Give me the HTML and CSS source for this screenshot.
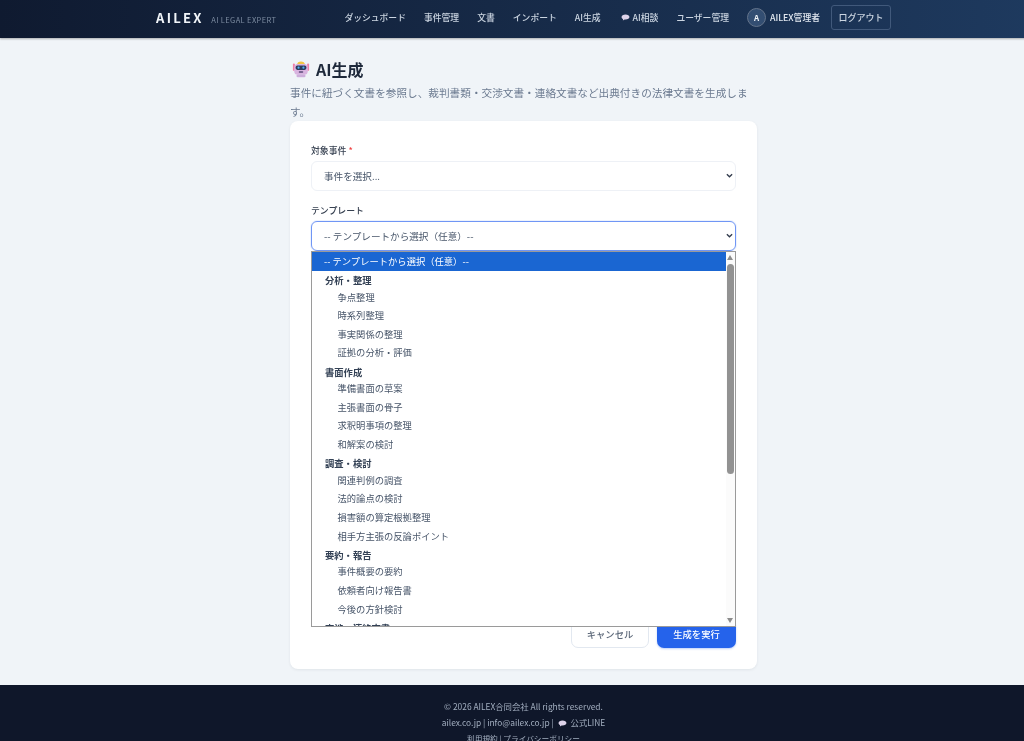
FILE: index.html
```html
<!DOCTYPE html>
<html lang="ja">
<head>
<meta charset="utf-8">
<title>AI生成 - AILEX</title>
<link rel="stylesheet" href="styles.css">
</head>
<body>
<header class="site-header">
  <div class="header-inner">
    <a class="brand" href="#"><span class="brand-name">AILEX</span><span class="brand-sub">AI LEGAL EXPERT</span></a>
    <nav class="nav">
      <a href="#">ダッシュボード</a>
      <a href="#">事件管理</a>
      <a href="#">文書</a>
      <a href="#">インポート</a>
      <a href="#">AI生成</a>
      <a href="#" class="nav-consult"><svg class="bubble" viewBox="0 0 10 8"><path d="M5 .6C2.4.6.5 1.8.5 3.5c0 1 .7 1.9 1.8 2.4l-.3 1.6 2-1.2H5c2.6 0 4.5-1.2 4.5-2.8S7.600.6 5 .6z"/></svg>AI相談</a>
      <a href="#">ユーザー管理</a>
      <span class="user"><span class="avatar">A</span>AILEX管理者</span>
      <button class="logout" type="button">ログアウト</button>
    </nav>
  </div>
</header>

<main class="main">
  <h1 class="title">
    <svg class="robot" viewBox="0 0 20 20">
      <rect x="1" y="4" width="2.200" height="8" rx="1" fill="#ef7fa6"/>
      <rect x="16.800" y="4" width="2.200" height="8" rx="1" fill="#ef7fa6"/>
      <path d="M5.500 5.500C5.500 .5 14.500 .5 14.500 5.500z" fill="#f5c542"/>
      <rect x="2.500" y="4.500" width="15" height="12" rx="4" fill="#d9b4e0"/>
      <rect x="4" y="6" width="12" height="5" rx="2" fill="#2d3a5c"/>
      <circle cx="7.300" cy="8.500" r="1.200" fill="#4fb4f0"/>
      <circle cx="12.700" cy="8.500" r="1.200" fill="#4fb4f0"/>
      <rect x="7.500" y="12.500" width="5" height="1.700" rx=".8" fill="#5a4a78"/>
      <rect x="5" y="16" width="10" height="3.200" rx="1.500" fill="#cdaedb"/>
    </svg>
    AI生成
  </h1>
  <p class="lead">事件に紐づく文書を参照し、裁判書類・交渉文書・連絡文書など出典付きの法律文書を生成します。</p>

  <form class="card">
    <div class="field">
      <label class="label">対象事件 <span class="req">*</span></label>
      <div class="select-wrap">
        <select class="select"><option>事件を選択...</option></select>
        <svg class="chevron" viewBox="0 0 8 5"><path d="M1 1l3 3 3-3"/></svg>
      </div>
    </div>
    <div class="field field-open">
      <label class="label">テンプレート</label>
      <div class="select-wrap">
        <select class="select select-focus"><option>-- テンプレートから選択（任意）--</option></select>
        <svg class="chevron" viewBox="0 0 8 5"><path d="M1 1l3 3 3-3"/></svg>
      </div>
      <div class="dropdown">
        <div class="list">
          <div class="opt opt-active">-- テンプレートから選択（任意）--</div>
          <div class="group">分析・整理</div>
          <div class="item">争点整理</div>
          <div class="item">時系列整理</div>
          <div class="item">事実関係の整理</div>
          <div class="item">証拠の分析・評価</div>
          <div class="group">書面作成</div>
          <div class="item">準備書面の草案</div>
          <div class="item">主張書面の骨子</div>
          <div class="item">求釈明事項の整理</div>
          <div class="item">和解案の検討</div>
          <div class="group">調査・検討</div>
          <div class="item">関連判例の調査</div>
          <div class="item">法的論点の検討</div>
          <div class="item">損害額の算定根拠整理</div>
          <div class="item">相手方主張の反論ポイント</div>
          <div class="group">要約・報告</div>
          <div class="item">事件概要の要約</div>
          <div class="item">依頼者向け報告書</div>
          <div class="item">今後の方針検討</div>
          <div class="group">交渉・連絡文書</div>
        </div>
        <div class="scrollbar">
          <span class="arrow arrow-up"></span>
          <span class="thumb"></span>
          <span class="arrow arrow-down"></span>
        </div>
      </div>
    </div>
    <div class="actions">
      <button class="btn btn-ghost" type="button">キャンセル</button>
      <button class="btn btn-primary" type="button">生成を実行</button>
    </div>
  </form>
</main>

<footer class="footer">
  <p>© 2026 AILEX合同会社 All rights reserved.</p>
  <p>ailex.co.jp | info@ailex.co.jp | <svg class="bubble bubble-foot" viewBox="0 0 10 8"><path d="M5 .6C2.4.6.5 1.8.5 3.5c0 1 .7 1.9 1.8 2.4l-.3 1.6 2-1.2H5c2.600 0 4.500-1.200 4.500-2.800S7.600.6 5 .6z"/></svg> 公式LINE</p>
  <p class="footer-links">利用規約 | プライバシーポリシー</p>
</footer>
</body>
</html>
```

FILE: styles.css
```css
* { box-sizing: border-box; }
html { overflow: hidden; height: 741px; background: #f0f4f8; }
body {
  margin: 0;
  width: 1047px;
  background: #f0f4f8;
  font-family: "Noto Sans CJK JP", "Noto Sans", sans-serif;
  color: #1e293b;
  filter: blur(.3px);
}
a { color: inherit; text-decoration: none; }

.site-header {
  height: 37.500px;
  background: linear-gradient(90deg, #0f1a30 0%, #1e3a5f 100%);
  box-shadow: 0 1px 2px rgba(0, 0, 0, .3);
  position: relative;
}
.header-inner {
  width: 735px;
  height: 100%;
  margin: 0 auto;
  padding-bottom: 3px;
  display: flex;
  align-items: center;
  justify-content: space-between;
}
.brand { display: flex; align-items: baseline; gap: 7.500px; }
.brand-name { font-size: 13px; font-weight: 700; letter-spacing: 2.300px; color: #f1f5f9; }
.brand-sub { font-size: 7.500px; letter-spacing: .38px; color: #7d8ca1; }
.nav { display: flex; align-items: center; gap: 18px; font-size: 8.800px; font-weight: 500; color: #cbd5e1; }
.nav-consult { display: flex; align-items: center; gap: 3px; margin-left: 2px; }
.bubble { width: 9px; height: 7px; fill: #ddd3ea; }
.bubble-foot { display: inline-block; vertical-align: -0.500px; margin: 0 2px; }
.user { display: flex; align-items: center; gap: 4px; color: #e2e8f0; margin-right: -7px; }
.avatar {
  width: 19px;
  height: 19px;
  border-radius: 50%;
  border: 1px solid #64748b;
  background: #334e72;
  color: #f1f5f9;
  font-size: 8px;
  font-weight: 700;
  display: flex;
  align-items: center;
  justify-content: center;
}
.logout {
  width: 60px;
  height: 25px;
  background: transparent;
  border: 1px solid #41597b;
  border-radius: 3px;
  font: inherit;
  font-size: 9px;
  color: #cbd5e1;
  padding: 0;
}

.main { width: 467px; margin: 0 auto; padding-top: 17px; height: 647.500px; }
.title { margin: 0; padding-left: 2px; height: 28px; display: flex; align-items: center; gap: 6px; font-size: 16px; font-weight: 700; color: #1e293b; }
.robot { width: 18px; height: 18px; }
.lead { margin: 0; font-size: 10.650px; line-height: 19px; color: #6b7a90; height: 38.500px; }

.card {
  height: 548px;
  background: #fff;
  border-radius: 8px;
  box-shadow: 0 1px 3px rgba(15, 23, 42, .07);
  padding: 21px 21px 0;
  position: relative;
  display: flex;
  flex-direction: column;
}
.field { margin-bottom: 11.500px; position: relative; }
.label { display: block; height: 19px; font-size: 8.900px; line-height: 18.500px; font-weight: 500; color: #374151; }
.req { color: #ef4444; }
.select-wrap { position: relative; }
.chevron { position: absolute; right: 3px; top: 12px; width: 7px; height: 5px; fill: none; stroke: #333c4d; stroke-width: 1.500; pointer-events: none; }
.select {
  display: block;
  width: 100%;
  height: 29.500px;
  padding: 0 12px;
  background: #fff;
  border: 1px solid #eef1f6;
  border-radius: 6px;
  font-family: inherit;
  font-size: 9.600px;
  color: #475569;
  appearance: none;
}
.select-focus { border-color: #7096f5; box-shadow: 0 0 0 1px rgba(37, 99, 235, .08); outline: none; }

.dropdown {
  position: absolute;
  top: 48.500px;
  left: 0;
  right: 0;
  height: 376px;
  background: #fff;
  border: 1px solid #9a9a9a;
  display: flex;
  z-index: 2;
  font-size: 9.300px;
  color: #475569;
}
.list { flex: 1; overflow: hidden; }
.opt, .item, .group { white-space: nowrap; }
.opt { height: 19px; line-height: 19px; padding-left: 12px; }
.opt-active { background: #1a66d2; color: #fff; }
.group { height: 17px; line-height: 17px; padding: 1.500px 0 0 13px; font-weight: 700; color: #334155; box-sizing: content-box; margin-bottom: -1.500px; }
.item { height: 18.670px; line-height: 18.670px; padding-left: 25.500px; }
.scrollbar { width: 9px; display: flex; flex-direction: column; align-items: center; background: #fbfbfb; position: relative; }
.thumb { position: absolute; top: 12px; left: 1px; width: 7px; height: 210px; border-radius: 4px; background: #929292; }
.arrow { width: 0; height: 0; border-left: 3.500px solid transparent; border-right: 3.500px solid transparent; position: absolute; left: 1px; }
.arrow-up { top: 3px; border-bottom: 5px solid #8c8c8c; }
.arrow-down { bottom: 3px; border-top: 5px solid #8c8c8c; }

.actions { margin-top: 357.500px; display: flex; justify-content: flex-end; gap: 8px; }
.btn { height: 28.500px; border-radius: 7px; font-family: inherit; font-size: 9.300px; font-weight: 500; padding: 0; }
.btn-ghost { width: 78px; background: #fff; border: 1px solid #e2e8f0; color: #5b6778; }
.btn-primary { width: 79px; background: #2563eb; border: 0; color: #fff; box-shadow: 0 1px 2px rgba(37, 99, 235, .3); }

.footer { background: #0f172a; height: 120px; padding-top: 12.500px; text-align: center; font-size: 8.400px; color: #a3afc0; }
.footer p { margin: 0; line-height: 16.500px; }
.footer .footer-links { font-size: 7.700px; }
```
